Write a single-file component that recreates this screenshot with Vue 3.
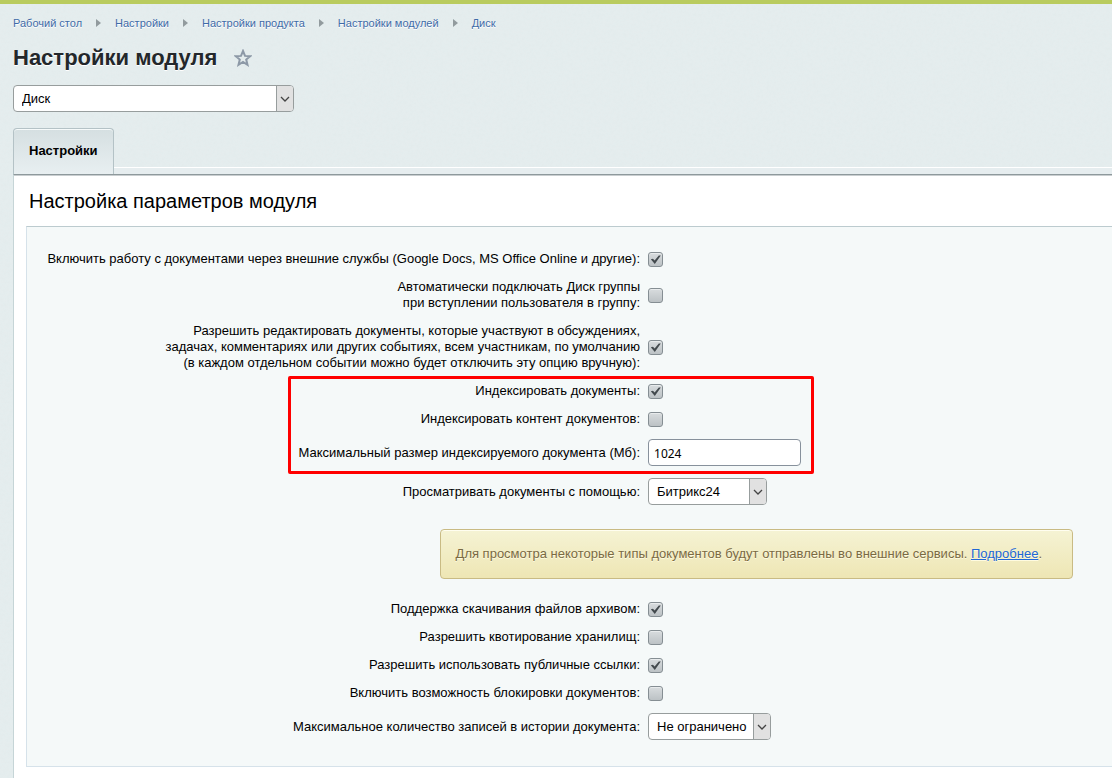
<template>
    <div class="page">
        <header class="top">
            <nav class="crumbs">
                <template v-for="(crumb, i) in crumbs" :key="crumb">
                    <span v-if="i > 0" class="crumb-arrow"></span>
                    <a href="#">{{ crumb }}</a>
                </template>
            </nav>
            <div class="title-row">
                <h1>Настройки модуля</h1>
                <button class="star" type="button" aria-label="Избранное">
                    <svg width="18" height="18" viewBox="0 0 18 18">
                        <path d="M9 2 L11 6.9 L16.2 7.2 L12.2 10.6 L13.5 15.8 L9 13 L4.5 15.8 L5.8 10.6 L1.8 7.2 L7 6.9 Z" />
                    </svg>
                </button>
            </div>
            <div class="select module-select">
                <select v-model="module" aria-label="Модуль">
                    <option>Диск</option>
                </select>
                <span class="select-arrow"><svg width="10" height="6" viewBox="0 0 10 6"><path d="M1 1 L5 5 L9 1" /></svg></span>
            </div>
        </header>

        <div class="tabs">
            <button class="tab" type="button">Настройки</button>
            <div class="tabs-line"></div>
        </div>

        <main class="content">
            <h2>Настройка параметров модуля</h2>
            <form class="panel" @submit.prevent>
                <div v-for="(group, g) in groups" :key="g" class="group" :class="{ marked: group.marked }">
                    <div v-for="row in group.rows" :key="row.id" class="row">
                        <label :for="row.id">
                            <template v-for="(line, n) in row.label" :key="n"><br v-if="n > 0">{{ line }}</template>
                        </label>
                        <div class="field">
                            <input v-if="row.type === 'check'" :id="row.id" v-model="row.value" type="checkbox" class="check">
                            <input v-else-if="row.type === 'text'" :id="row.id" v-model="row.value" type="text" class="text">
                            <div v-else class="select">
                                <select :id="row.id" v-model="row.value">
                                    <option>{{ row.value }}</option>
                                </select>
                                <span class="select-arrow"><svg width="10" height="6" viewBox="0 0 10 6"><path d="M1 1 L5 5 L9 1" /></svg></span>
                            </div>
                        </div>
                    </div>
                    <div v-if="group.note" class="note-row">
                        <div class="note">Для просмотра некоторые типы документов будут отправлены во внешние сервисы. <a href="#">Подробнее</a>.</div>
                    </div>
                </div>
            </form>
        </main>
    </div>
</template>

<script setup>
import { ref } from "vue";

const crumbs = ["Рабочий стол", "Настройки", "Настройки продукта", "Настройки модулей", "Диск"];
const module = ref("Диск");

const check = (id, value, ...label) => ({ id, type: "check", value, label });

const groups = ref([
    {
        rows: [
            check("external", true, "Включить работу с документами через внешние службы (Google Docs, MS Office Online и другие):"),
            check("autoconnect", false, "Автоматически подключать Диск группы", "при вступлении пользователя в группу:"),
            check("edit", true,
                "Разрешить редактировать документы, которые участвуют в обсуждениях,",
                "задачах, комментариях или других событиях, всем участникам, по умолчанию",
                "(в каждом отдельном событии можно будет отключить эту опцию вручную):"),
        ],
    },
    {
        marked: true,
        rows: [
            check("index", true, "Индексировать документы:"),
            check("index-content", false, "Индексировать контент документов:"),
            { id: "max-size", type: "text", value: "1024", label: ["Максимальный размер индексируемого документа (Мб):"] },
        ],
    },
    {
        note: true,
        rows: [
            { id: "viewer", type: "select", value: "Битрикс24", label: ["Просматривать документы с помощью:"] },
        ],
    },
    {
        rows: [
            check("archive", true, "Поддержка скачивания файлов архивом:"),
            check("quota", false, "Разрешить квотирование хранилищ:"),
            check("public-links", true, "Разрешить использовать публичные ссылки:"),
            check("lock", false, "Включить возможность блокировки документов:"),
            { id: "history", type: "select", value: "Не ограничено", label: ["Максимальное количество записей в истории документа:"] },
        ],
    },
]);
</script>

<style>
body {
    margin: 0;
    background: #e5edee;
}
</style>

<style scoped>
.page {
    min-height: 100vh;
    box-sizing: border-box;
    border-top: 4px solid #b9cb5e;
    padding-left: 13px;
    display: flex;
    flex-direction: column;
    overflow: hidden;
    background-color: #e5edee;
    background-image: url("data:image/svg+xml,%3Csvg xmlns='http://www.w3.org/2000/svg' width='120' height='120'%3E%3Cfilter id='n'%3E%3CfeTurbulence type='fractalNoise' baseFrequency='.3' numOctaves='2' stitchTiles='stitch'/%3E%3CfeColorMatrix values='0 0 0 0 .6 0 0 0 0 .72 0 0 0 0 .72 .5 0 0 0 -.13'/%3E%3C/filter%3E%3Crect width='120' height='120' filter='url(%23n)' opacity='.3'/%3E%3C/svg%3E");
    font: 13px/16px "Liberation Sans", Arial, sans-serif;
    color: #000;
}

.crumbs {
    display: flex;
    align-items: center;
    margin-top: 11px;
    font-size: 11px;
}

.crumbs a {
    color: #3f6ba8;
    text-decoration: none;
    text-shadow: 0 1px 0 #fff;
}

.crumb-arrow {
    margin: 0 14px;
    border: 4px solid transparent;
    border-left: 5px solid #929b9e;
    border-right: 0;
}

.title-row {
    display: flex;
    align-items: center;
    gap: 17px;
    height: 28px;
    margin-top: 13px;
}

h1 {
    margin: 0;
    font-size: 22px;
    line-height: 28px;
    color: #23272b;
    text-shadow: 0 1px 0 #fff;
}

.star {
    display: flex;
    padding: 0;
    border: 0;
    background: none;
}

.star path {
    fill: none;
    stroke: #8d99a7;
    stroke-width: 2;
}

.select {
    display: flex;
    position: relative;
    min-width: 119px;
}

.select select {
    appearance: none;
    box-sizing: border-box;
    width: 100%;
    height: 27px;
    margin: 0;
    padding: 0 23px 0 8px;
    border: 1px solid #979d9d;
    border-radius: 4px;
    background: #fff;
    font: inherit;
    color: #000;
}

.select-arrow {
    position: absolute;
    top: 1px;
    right: 1px;
    bottom: 1px;
    width: 16px;
    display: flex;
    align-items: center;
    justify-content: center;
    border-left: 1px solid #979d9d;
    border-radius: 0 3px 3px 0;
    background: #e1e1e1;
    pointer-events: none;
}

.select-arrow path {
    fill: none;
    stroke: #444;
    stroke-width: 1.3;
}

.module-select {
    width: 281px;
    margin-top: 13px;
}

.tabs {
    display: flex;
    align-items: flex-end;
    margin-top: 16px;
}

.tab {
    height: 46px;
    padding: 0 15px 2px;
    border: 1px solid #b4c2c6;
    border-bottom: 0;
    border-radius: 4px 4px 0 0;
    background: linear-gradient(#d5dfe1, #e8eff1);
    box-shadow: inset 0 1px 0 #f6fafa;
    font: bold 13px "Liberation Sans", Arial, sans-serif;
    color: #000;
}

.tabs-line {
    flex: 1;
    height: 7px;
    box-sizing: border-box;
    border-top: 1px solid #fff;
    background: #e6edef;
}

.content {
    flex: 1;
    border-top: 1px solid #8e999c;
    border-left: 1px solid #c6d5d7;
    background: #fff;
    box-shadow: inset 0 1px 0 #c9ced0;
    padding: 0 0 11px 12px;
}

h2 {
    margin: 14px 0 13px 3px;
    font-size: 20px;
    line-height: 24px;
    font-weight: normal;
}

.panel {
    border: 1px solid #d6e2ea;
    border-top-color: #bccbcf;
    border-right: 0;
    background: #f5f9f9;
    padding: 18px 0 20px;
}

.group {
    position: relative;
}

.marked::after {
    content: "";
    position: absolute;
    top: -1px;
    bottom: -2px;
    left: calc(56.5% - 352px);
    width: 520px;
    border: 3px solid #f00;
    border-radius: 2px;
    pointer-events: none;
}

.row {
    display: flex;
    align-items: center;
    padding: 6px 0;
}

.row label {
    box-sizing: border-box;
    width: 56.5%;
    text-align: right;
}

.field {
    flex: 1;
    display: flex;
    padding-left: 8px;
}

.check {
    appearance: none;
    width: 15px;
    height: 15px;
    margin: 0;
    border: 1px solid #858e93;
    border-radius: 3px;
    background: linear-gradient(#d8dcde, #bcc2c5);
    box-shadow: inset 0 1px 0 #e8ebec;
}

.check:checked {
    background: url("data:image/svg+xml,%3Csvg xmlns='http://www.w3.org/2000/svg' width='13' height='13'%3E%3Cpath d='M1.8 6.2 L4 5.8 L5.6 7.6 L9.8 2.5 L11.8 2.5 L5.8 11 Z' fill='%23434a4e'/%3E%3C/svg%3E") center no-repeat, linear-gradient(#d8dcde, #bcc2c5);
}

.text {
    box-sizing: border-box;
    width: 153px;
    height: 27px;
    padding: 2px 5px 0;
    border: 1px solid #87919c;
    border-radius: 4px;
    background: #fff;
    font: 12px "Noto Sans", sans-serif;
    color: #000;
}

.note-row {
    display: flex;
    justify-content: flex-end;
    padding: 18px 39px 16px 0;
}

.note {
    padding: 16px 30px 16px 15px;
    border: 1px solid #c9bb84;
    border-radius: 4px;
    background: linear-gradient(#f5f3d4, #eee6b4);
    box-shadow: inset 0 1px 0 #fffef0;
    color: #7a6a43;
    text-shadow: 0 1px 0 #fffbe0;
}

.note a {
    color: #2067d5;
}
</style>
